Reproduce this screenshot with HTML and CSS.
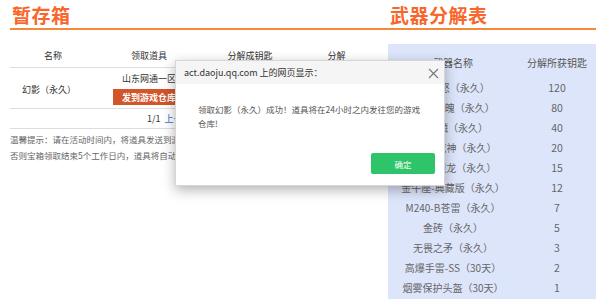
FILE: index.html
```html
<!DOCTYPE html>
<html>

<head>
    <title>暂存箱</title>
    <link rel="stylesheet" href="styles.css">
</head>

<body>
    <div class="page">
        <div class="titles">
            <h2 class="title title-left">暂存箱</h2>
            <h2 class="title title-right">武器分解表</h2>
        </div>

        <div class="content">
            <div class="box">
                <table class="box-table">
                    <thead>
                        <tr>
                            <th class="c1">名称</th>
                            <th class="c2">领取道具</th>
                            <th class="c3">分解成钥匙</th>
                            <th class="c4">分解</th>
                        </tr>
                    </thead>
                    <tbody>
                        <tr class="item-row">
                            <td>幻影（永久）</td>
                            <td>
                                <div class="server">山东网通一区</div>
                                <button class="send-btn">发到游戏仓库</button>
                            </td>
                            <td>120</td>
                            <td><button class="split-btn">分解</button></td>
                        </tr>
                    </tbody>
                </table>
                <div class="pager">1/1&nbsp;&nbsp;<a>上一页</a>&nbsp;&nbsp;<a>下一页</a></div>
                <p class="tip">温馨提示：请在活动时间内，将道具发送到游戏仓库或分解成钥匙，<br>否则宝箱领取结束5个工作日内，道具将自动发送到您的游戏仓库。</p>
            </div>

            <div class="split">
                <table class="split-table">
                    <thead>
                        <tr>
                            <th>武器名称</th>
                            <th>分解所获钥匙</th>
                        </tr>
                    </thead>
                    <tbody id="splitData">
                        <!-- rows filled by script -->
                    </tbody>
                </table>
            </div>
        </div>
    </div>

    <div class="dialog">
        <div class="dialog-head">
            <span>act.daoju.qq.com 上的网页显示：</span>
            <span class="close">
                <svg width="11" height="11" viewBox="0 0 11 11">
                    <path d="M1 1 L10 10 M10 1 L1 10" stroke="#777" stroke-width="1.1" fill="none" />
                </svg>
            </span>
        </div>
        <div class="dialog-body">领取幻影（永久）成功！道具将在24小时之内发往您的游戏仓库!</div>
        <div class="dialog-foot">
            <button class="ok-btn">确定</button>
        </div>
    </div>

    <script>
        const weapons = [
            ['雷神-怒（永久）', 120],
            ['屠龙-魂魄（永久）', 80],
            ['火麒麟（永久）', 40],
            ['AK47-死神（永久）', 20],
            ['AWM-烈龙（永久）', 15],
            ['金牛座-典藏版（永久）', 12],
            ['M240-B苍雷（永久）', 7],
            ['金砖（永久）', 5],
            ['无畏之矛（永久）', 3],
            ['高爆手雷-SS（30天）', 2],
            ['烟雾保护头盔（30天）', 1]
        ];

        let rows = '';
        weapons.forEach(w => {
            rows += `<tr><td>${w[0]}</td><td>${w[1]}</td></tr>`;
        });
        document.getElementById('splitData').innerHTML = rows;
    </script>
</body>

</html>
```

FILE: styles.css
```css
body {
    margin: 0;
    padding: 0;
    background-color: #fff;
    font-family: "Noto Sans CJK SC", "Liberation Sans", sans-serif;
    color: #333;
    overflow: hidden;
}

.page {
    padding: 0 4px 0 10px;
}

.titles {
    display: flex;
    height: 28px;
    border-bottom: 2px solid #f5893a;
}

.title {
    margin: 0;
    font-size: 19px;
    font-weight: bold;
    color: #f9662b;
    line-height: 30px;
    letter-spacing: 0.5px;
}

.title-left {
    width: 378px;
    padding-left: 2px;
}

.content {
    display: flex;
    margin-top: 14px;
}

.box {
    width: 365px;
    margin-right: 13px;
}

.box-table {
    width: 100%;
    border-collapse: collapse;
    font-size: 9px;
}

.box-table th {
    font-weight: normal;
    height: 23px;
    padding: 0;
    border-bottom: 1px solid #ddd;
    color: #333;
}

.box-table .c1 { width: 86px; }
.box-table .c2 { width: 106px; }
.box-table .c3 { width: 96px; }
.box-table .c4 { width: 77px; }

.box-table td {
    text-align: center;
    padding: 0;
    height: 37px;
    border-bottom: 1px solid #ddd;
    color: #333;
}

.item-row td:first-child {
    padding-top: 3px;
    padding-right: 8px;
}

.server {
    line-height: 14px;
    margin-top: 3px;
}

.send-btn {
    display: block;
    margin: 3px auto 2px;
    width: 72px;
    height: 16px;
    border: none;
    padding: 0;
    background-color: #d3552a;
    color: #fff;
    font-family: inherit;
    font-size: 9px;
    font-weight: bold;
}

.split-btn {
    border: none;
    background-color: #d3552a;
    color: #fff;
    font-size: 9px;
    padding: 2px 8px;
}

.pager {
    font-size: 9px;
    height: 19px;
    line-height: 19px;
    padding-left: 137px;
    border-bottom: 1px solid #ddd;
    color: #333;
}

.pager a {
    color: #2a6ed4;
}

.tip {
    margin: 2px 0 0;
    font-size: 8.5px;
    line-height: 16px;
    color: #666;
    white-space: nowrap;
}

.split {
    width: 208px;
    height: 260px;
    background-color: #dde5fb;
    padding-top: 8px;
}

.split-table {
    width: 100%;
    border-collapse: collapse;
    font-size: 10px;
    color: #666;
}

.split-table th {
    font-weight: normal;
    height: 20px;
    padding: 0 0 5px;
    color: #555;
}

.split-table th:first-child,
.split-table td:first-child {
    width: 130px;
    text-align: center;
}

.split-table th:last-child,
.split-table td:last-child {
    text-align: center;
}

.split-table td {
    height: 20px;
    padding: 0;
    color: #666;
}

.split-table td:last-child {
    font-size: 10.5px;
}

.dialog {
    position: absolute;
    left: 175px;
    top: 60px;
    width: 268px;
    height: 124px;
    background-color: #fff;
    border: 1px solid #d6d6d6;
    box-shadow: 0 4px 12px rgba(0, 0, 0, 0.3);
    font-size: 8.5px;
}

.dialog-head {
    display: flex;
    justify-content: space-between;
    align-items: center;
    height: 23px;
    padding: 0 5px 0 8px;
    background-color: #f5f5f5;
    color: #333;
    font-size: 9px;
}

.close {
    display: flex;
    margin-top: 1px;
}

.dialog-body {
    padding: 18px 18px 0 22px;
    line-height: 14px;
    height: 51px;
    color: #555;
}

.dialog-foot {
    display: flex;
    justify-content: flex-end;
    padding-right: 9px;
}

.ok-btn {
    width: 64px;
    height: 21px;
    border: none;
    border-radius: 2px;
    background-color: #2dc46a;
    color: #fff;
    font-family: inherit;
    font-size: 8.5px;
    padding: 0;
}
```
